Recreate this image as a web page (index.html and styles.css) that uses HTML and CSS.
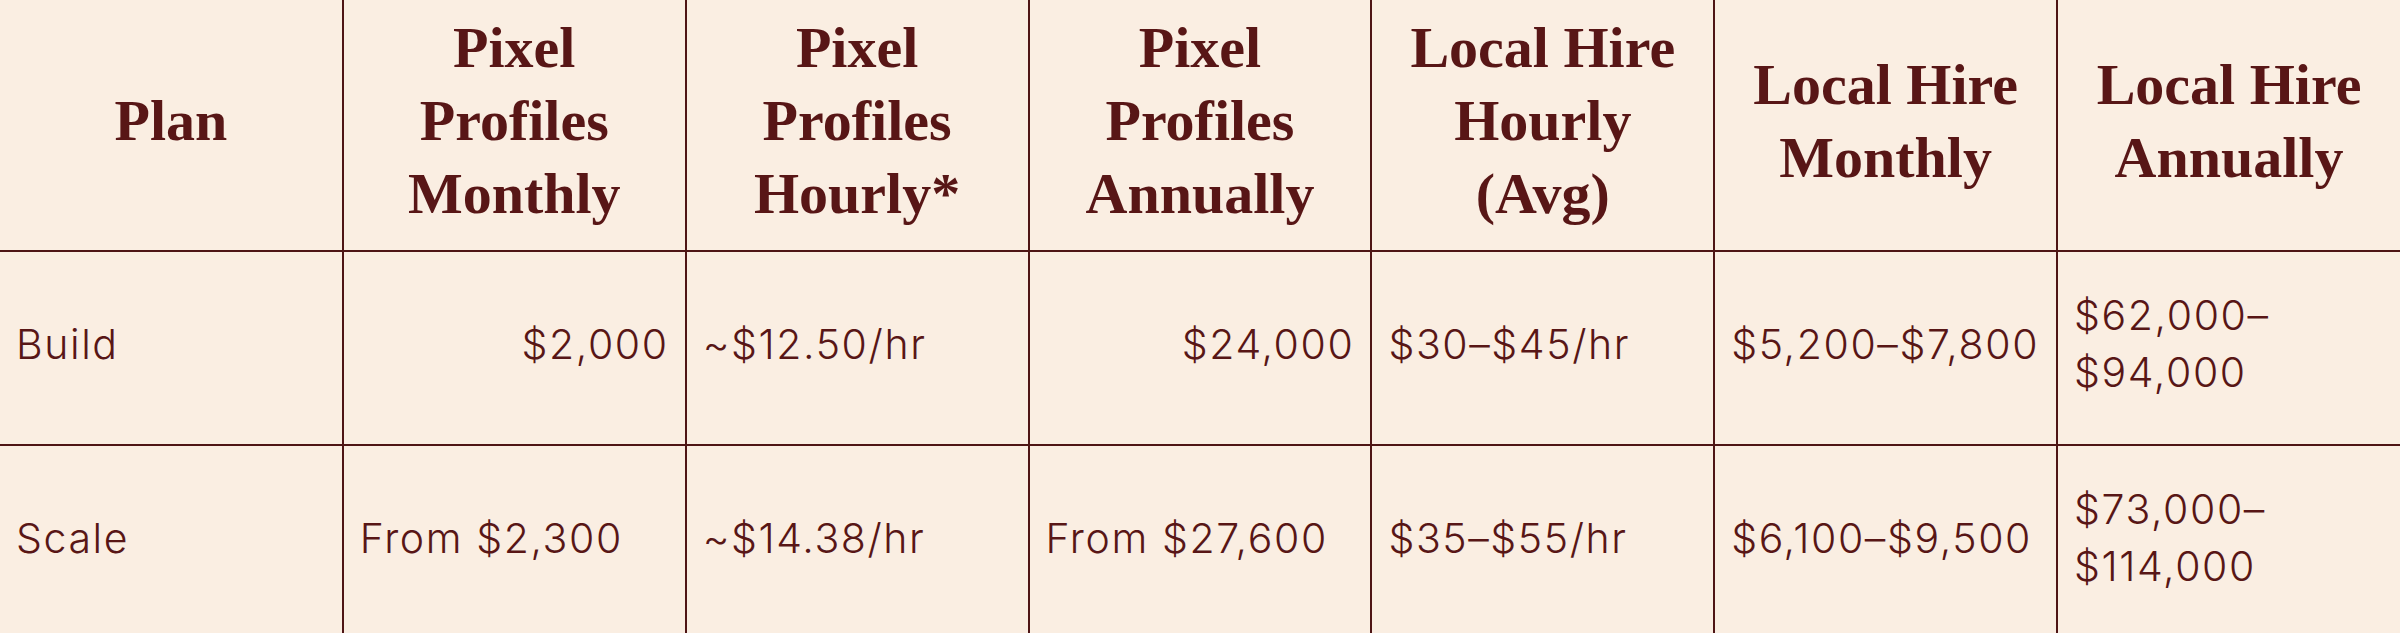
FILE: index.html
```html
<!DOCTYPE html>
<html lang="en">
<head>
<meta charset="utf-8">
<title>Pricing comparison</title>
<link rel="stylesheet" href="styles.css">
</head>
<body>
<table class="compare">
  <thead>
    <tr>
      <th>Plan</th>
      <th>Pixel Profiles Monthly</th>
      <th>Pixel Profiles Hourly*</th>
      <th>Pixel Profiles Annually</th>
      <th>Local Hire Hourly (Avg)</th>
      <th>Local Hire Monthly</th>
      <th>Local Hire Annually</th>
    </tr>
  </thead>
  <tbody>
    <tr>
      <td>Build</td>
      <td class="num">$2,000</td>
      <td>~$12.50/hr</td>
      <td class="num">$24,000</td>
      <td>$30–$45/hr</td>
      <td>$5,200–$7,800</td>
      <td>$62,000–<br>$94,000</td>
    </tr>
    <tr>
      <td>Scale</td>
      <td>From $2,300</td>
      <td>~$14.38/hr</td>
      <td>From $27,600</td>
      <td>$35–$55/hr</td>
      <td>$6,100–$9,500</td>
      <td>$73,000–<br>$114,000</td>
    </tr>
  </tbody>
</table>
</body>
</html>
```
FILE: styles.css
```css
html, body {
  margin: 0;
  padding: 0;
  background: #faeee2;
}

.compare {
  width: 2400px;
  table-layout: fixed;
  border-collapse: collapse;
  color: #581616;
}

.compare th,
.compare td {
  border: 2px solid #4e1515;
  vertical-align: middle;
}

.compare tr > :first-child { border-left: none; }
.compare tr > :last-child { border-right: none; }
.compare thead th { border-top: none; }

.compare th {
  height: 241px;
  padding: 0 16px 9px;
  font-family: "Liberation Serif", "DejaVu Serif", serif;
  font-weight: 700;
  font-size: 58px;
  line-height: 73px;
  text-align: center;
}

.compare td {
  height: 184px;
  padding: 0 16px 8px;
  font-family: "Inter", "Open Sans", sans-serif;
  font-weight: 300;
  font-size: 41px;
  letter-spacing: 1.6px;
  line-height: 57px;
  text-align: left;
}

.compare td.num {
  text-align: right;
}
```
